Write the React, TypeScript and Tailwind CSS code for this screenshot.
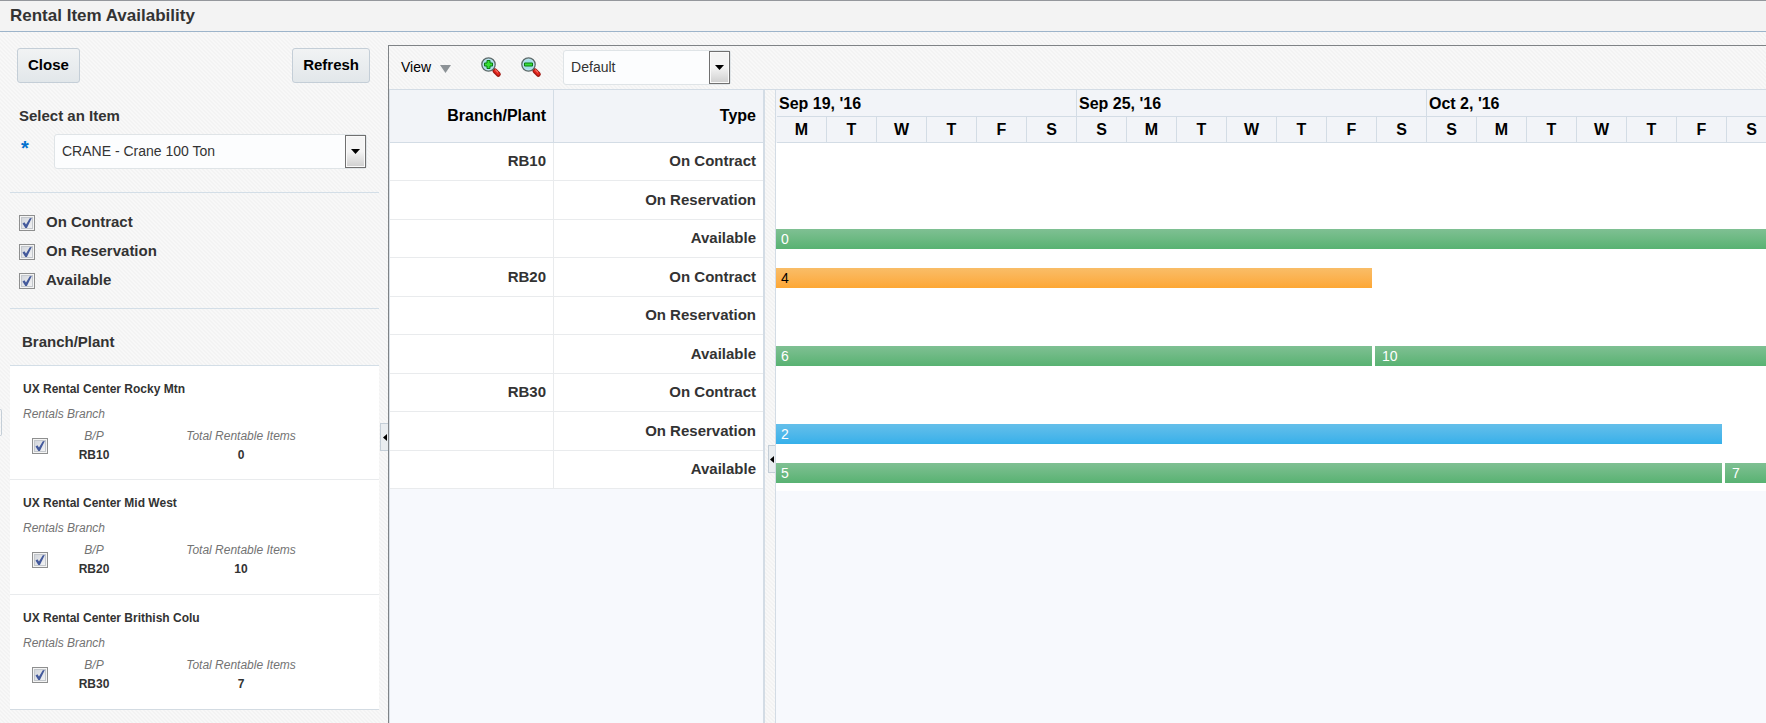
import React from "react";

type Tone = "green" | "orange" | "blue";
type Bar = { label: string; width: number | null; tone: Tone };
type Row = { branch: string; type: string; bars: Bar[] };

const ROWS: Row[] = [
  { branch: "RB10", type: "On Contract", bars: [] },
  { branch: "", type: "On Reservation", bars: [] },
  { branch: "", type: "Available", bars: [{ label: "0", width: null, tone: "green" }] },
  { branch: "RB20", type: "On Contract", bars: [{ label: "4", width: 596, tone: "orange" }] },
  { branch: "", type: "On Reservation", bars: [] },
  {
    branch: "",
    type: "Available",
    bars: [
      { label: "6", width: 596, tone: "green" },
      { label: "10", width: null, tone: "green" },
    ],
  },
  { branch: "RB30", type: "On Contract", bars: [] },
  { branch: "", type: "On Reservation", bars: [{ label: "2", width: 946, tone: "blue" }] },
  {
    branch: "",
    type: "Available",
    bars: [
      { label: "5", width: 946, tone: "green" },
      { label: "7", width: null, tone: "green" },
    ],
  },
];

const WEEKS = [
  { label: "Sep 19, '16", days: ["M", "T", "W", "T", "F", "S"] },
  { label: "Sep 25, '16", days: ["S", "M", "T", "W", "T", "F", "S"] },
  { label: "Oct 2, '16", days: ["S", "M", "T", "W", "T", "F", "S"] },
];

const BRANCHES = [
  { name: "UX Rental Center Rocky Mtn", code: "RB10", total: 0 },
  { name: "UX Rental Center Mid West", code: "RB20", total: 10 },
  { name: "UX Rental Center Brithish Colu", code: "RB30", total: 7 },
];

const TONES: Record<Tone, string> = {
  green: "from-[#7fc093] to-[#58b272] text-white",
  orange: "from-[#f9bd67] to-[#fda733] text-black",
  blue: "from-[#64bfea] to-[#35b0ea] text-white",
};

const STRIPES =
  "bg-[#f6f6f6] bg-[linear-gradient(45deg,#f3f3f3_25%,#f8f8f8_25%,#f8f8f8_50%,#f3f3f3_50%,#f3f3f3_75%,#f8f8f8_75%)] bg-size-[4px_4px]";

function Check({ id, label }: { id: string; label?: string }) {
  return (
    <span className="relative block size-4 shrink-0">
      <input
        id={id}
        type="checkbox"
        defaultChecked
        aria-label={label}
        className="peer block size-4 appearance-none border border-[#8e8f8f] bg-linear-to-br from-[#cdd1d8] to-[#f8f8f8] shadow-[inset_0_0_0_1px_#f4f4f4,inset_0_0_0_2px_#c3c7cc]"
      />
      <svg
        viewBox="0 0 16 16"
        className="pointer-events-none absolute inset-0 size-4 opacity-0 peer-checked:opacity-100"
        aria-hidden="true"
      >
        <path d="M3.500 8.500 5.400 7.300 7 9.600 10.800 3.200 12.800 3 7.900 13 6.300 13Z" fill="#445a9c" />
      </svg>
    </span>
  );
}

function Combo({ id, value, label, className }: { id: string; value: string; label?: string; className: string }) {
  return (
    <div className={"relative rounded-[3px] border border-[#dfe4e7] bg-[#fcfdfe] " + className}>
      <select
        id={id}
        aria-label={label}
        className="h-full w-full appearance-none bg-transparent pr-6 pl-[7px] text-[14px] text-[#333333] outline-none"
      >
        <option>{value}</option>
      </select>
      <span className="pointer-events-none absolute inset-y-0 right-0 flex w-[21px] items-center justify-center border border-[#707070] bg-linear-to-b from-[#f4f4f4] from-50% to-[#cfcfcf] shadow-[inset_0_0_0_1px_#fafafa]">
        <svg width="9" height="5" viewBox="0 0 9 5" aria-hidden="true">
          <path d="M0 0h9L4.500 5z" fill="#000" />
        </svg>
      </span>
    </div>
  );
}

function Magnifier({ plus }: { plus: boolean }) {
  return (
    <svg width="21" height="21" viewBox="0 0 21 21" aria-hidden="true">
      <path d="M11.500 11.500 14 14" stroke="#6b5a52" strokeWidth="3" />
      <path d="M14 14 17.300 17.300" stroke="#a01812" strokeWidth="5" strokeLinecap="round" />
      <path d="M14.200 13.800 17.200 16.800" stroke="#e6261c" strokeWidth="3" strokeLinecap="round" />
      <path d="M14.500 13 16.800 15.200" stroke="#f79a90" strokeWidth="1" strokeLinecap="round" />
      <circle cx="7.500" cy="7.500" r="6.600" fill="#a4dde8" stroke="#5d6a6a" strokeWidth="1.500" />
      <circle cx="7.500" cy="7.500" r="5.500" fill="none" stroke="#cfeaf0" strokeWidth="0.700" />
      {plus ? (
        <path
          d="M6 3.500h3v2.500h2.500v3h-2.500v2.500h-3v-2.500h-2.500v-3h2.500z"
          fill="#35e035"
          stroke="#0b7a12"
          strokeWidth="1"
        />
      ) : (
        <path d="M3.500 6h8v3h-8z" fill="#35e035" stroke="#0b7a12" strokeWidth="1" />
      )}
    </svg>
  );
}

function PushButton({ children }: { children: React.ReactNode }) {
  return (
    <button
      type="button"
      className="h-[35px] rounded-[3px] border border-[#c4ced7] bg-linear-to-b from-[#f1f3f4] to-[#e2e7ea] px-2.5 text-[15px] font-bold text-black"
    >
      {children}
    </button>
  );
}

function CollapseTab({ className }: { className: string }) {
  return (
    <button
      type="button"
      aria-label="Collapse pane"
      className={
        "absolute flex h-7 items-center justify-end border border-r-0 border-[#c4ced7] bg-[#e9edf0] pr-px " + className
      }
    >
      <svg width="4" height="7" viewBox="0 0 4 7" aria-hidden="true">
        <path d="M4 0v7L0 3.500z" fill="#000" />
      </svg>
    </button>
  );
}

function Sidebar() {
  return (
    <aside className="relative w-[388px] shrink-0 pr-[9px] pl-2.5">
      <div className="flex justify-between pt-4 pr-[9px] pl-[7px]">
        <PushButton>Close</PushButton>
        <PushButton>Refresh</PushButton>
      </div>

      <div className="border-b border-[#d3dee7] pt-[23px] pr-3 pb-[23px] pl-[9px]">
        <label htmlFor="item" className="block text-[15px] leading-5 font-bold text-[#333333]">
          Select an Item
        </label>
        <div className="mt-2 flex items-start">
          <span className="w-[35px] pl-0.5 text-[20px] leading-7 font-bold text-[#0572ce]">*</span>
          <Combo id="item" value="CRANE - Crane 100 Ton" className="h-[35px] flex-1" />
        </div>
      </div>

      <div className="flex flex-col gap-[9px] border-b border-[#d3dee7] pt-5 pb-[17px] pl-[9px]">
        {["On Contract", "On Reservation", "Available"].map((name) => (
          <div key={name} className="flex items-center gap-[11px]">
            <Check id={name} />
            <label htmlFor={name} className="pb-0.5 text-[15px] leading-[18px] font-bold text-[#333333]">
              {name}
            </label>
          </div>
        ))}
      </div>

      <h2 className="pt-[23px] pb-[13px] pl-3 text-[15px] leading-5 font-bold text-[#333333]">Branch/Plant</h2>

      <ul className="border-t border-[#d3dee7] bg-white">
        {BRANCHES.map((b) => (
          <li
            key={b.code}
            className="h-[115px] border-b border-[#e9ebed] pt-[15px] pl-[13px] text-[12px] text-[#737373] first:h-[114px] last:border-[#d3dbe2]"
          >
            <h3 className="leading-4 font-bold text-[#333333]">{b.name}</h3>
            <p className="mt-[9px] leading-4 italic">Rentals Branch</p>
            <div className="mt-[5px] flex items-center">
              <div className="w-[45px] pl-[9px]">
                <Check id={b.code} label={b.name} />
              </div>
              <dl className="w-[52px] text-center">
                <dt className="leading-[18px] italic">B/P</dt>
                <dd className="leading-5 font-bold text-[#333333]">{b.code}</dd>
              </dl>
              <dl className="ml-14 w-[130px] text-center">
                <dt className="leading-[18px] italic">Total Rentable Items</dt>
                <dd className="leading-5 font-bold text-[#333333]">{b.total}</dd>
              </dl>
            </div>
          </li>
        ))}
      </ul>

      <span className="absolute top-[377px] left-0 h-[27px] w-0.5 rounded-r-[3px] border border-l-0 border-[#c4ced7]" />
      <CollapseTab className="top-[391px] right-0 w-2" />
    </aside>
  );
}

function Toolbar() {
  return (
    <div className={"flex h-[44px] items-center border-b border-[#d3dce5] pl-3 " + STRIPES}>
      <button type="button" className="flex items-center gap-[9px] text-[14px] text-black">
        View
        <svg width="11" height="8" viewBox="0 0 11 8" aria-hidden="true" className="mt-0.5">
          <path d="M0 0h11L5.500 8z" fill="#8c9296" />
        </svg>
      </button>
      <button type="button" aria-label="Zoom in" className="ml-[30px]">
        <Magnifier plus />
      </button>
      <button type="button" aria-label="Zoom out" className="ml-[19px]">
        <Magnifier plus={false} />
      </button>
      <Combo id="scale" label="Scale" value="Default" className="ml-[21px] h-[35px] w-[168px]" />
    </div>
  );
}

function RowHeaders() {
  return (
    <div className="w-[375px] shrink-0 border-r-2 border-[#d3dce5]">
      <table className="w-full table-fixed border-separate border-spacing-0 text-right text-[#333333]">
        <thead>
          <tr className="h-[53px] bg-[#f2f4f8] text-[16px] text-black">
            <th className="w-[164px] border-r border-b border-[#d3dce5] pr-[7px] text-right">Branch/Plant</th>
            <th className="border-b border-[#d3dce5] pr-[7px] text-right">Type</th>
          </tr>
        </thead>
        <tbody className="bg-white text-[15px] font-bold">
          {ROWS.map((row, i) => (
            <tr key={i} className="h-[38px] even:h-[39px]">
              <td className="border-r border-b border-[#e9ebed] p-0 pr-[7px]">{row.branch}</td>
              <td className="border-b border-[#e9ebed] p-0 pr-[7px]">{row.type}</td>
            </tr>
          ))}
        </tbody>
      </table>
    </div>
  );
}

function Timeline() {
  return (
    <div className="min-w-0 flex-1 overflow-hidden border-l border-[#d3dce5]">
      <div className="flex bg-[#f2f4f8] pl-px text-[16px] font-bold text-black">
        {WEEKS.map((week) => (
          <div key={week.label} className="shrink-0">
            <div className="h-[27px] border-r border-b border-[#d3dce5] pl-0.5 leading-[27px]">{week.label}</div>
            <div className="flex">
              {week.days.map((day, i) => (
                <div
                  key={i}
                  className="h-[26px] w-[50px] shrink-0 border-r border-b border-[#d3dce5] text-center leading-[25px]"
                >
                  {day}
                </div>
              ))}
            </div>
          </div>
        ))}
      </div>
      {ROWS.map((row, i) => (
        <div key={i} className="flex h-[39px] gap-[3px] bg-white pt-2 last:h-9">
          {row.bars.map((bar) => (
            <div
              key={bar.label}
              className={
                "h-5 bg-linear-to-b pl-[5px] text-[14px] leading-5 not-first:pl-[7px] " +
                TONES[bar.tone] +
                (bar.width === null ? " flex-1" : " shrink-0")
              }
              style={bar.width === null ? undefined : { width: bar.width }}
            >
              {bar.label}
            </div>
          ))}
        </div>
      ))}
    </div>
  );
}

export default function App() {
  return (
    <div
      className={
        "flex min-h-screen flex-col overflow-hidden [font-family:'Liberation_Sans',Arial,sans-serif] " + STRIPES
      }
    >
      <header className="h-8 border-t border-b border-t-[#94979c] border-b-[#9db4ca] bg-[#f3f3f3] pl-2.5">
        <h1 className="text-[17px] leading-[30px] font-bold text-[#333333]">Rental Item Availability</h1>
      </header>
      <div className="flex flex-1">
        <Sidebar />
        <main className="mt-[13px] flex min-w-0 flex-1 flex-col border-t border-l border-[#7f8386]">
          <Toolbar />
          <div className="flex flex-1 border-l border-[#d9e0e7] bg-[#f7f9fd]">
            <RowHeaders />
            <div className={"relative w-2.5 shrink-0 " + STRIPES}>
              <CollapseTab className="top-[355px] right-0 w-[7px]" />
            </div>
            <Timeline />
          </div>
        </main>
      </div>
    </div>
  );
}
